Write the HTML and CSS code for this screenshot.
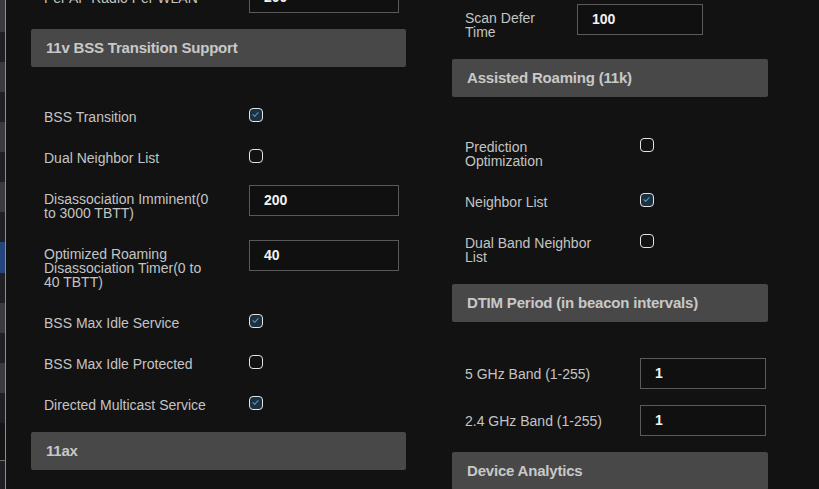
FILE: index.html
```html
<!DOCTYPE html>
<html lang="en">
<head>
<meta charset="utf-8">
<title>WLAN Advanced</title>
<link rel="stylesheet" href="styles.css">
</head>
<body>
<div class="page">
  <nav class="rail">
    <span class="rail-item gray first"></span>
    <span class="rail-item dark"></span>
    <span class="rail-item gray"></span>
    <span class="rail-item dark"></span>
    <span class="rail-item gray"></span>
    <span class="rail-item dark"></span>
    <span class="rail-item gray"></span>
    <span class="rail-item dark"></span>
    <span class="rail-item blue"></span>
    <span class="rail-item dark"></span>
    <span class="rail-item gray"></span>
    <span class="rail-item dark"></span>
    <span class="rail-item gray"></span>
    <span class="rail-item dark"></span>
    <span class="rail-item darkest"></span>
    <span class="rail-item dark"></span>
  </nav>
  <div class="rail-line"></div>

  <main class="content">
    <div class="col col-left">
      <div class="row row-center row-top">
        <span class="lbl lbl-left">Per AP Radio Per WLAN</span>
        <div class="field field-left">200</div>
      </div>

      <div class="section-head">11v BSS Transition Support</div>
      <div class="section-body body-left">
        <div class="row">
          <span class="lbl lbl-left lbl-check">BSS Transition</span>
          <span class="check checked"><svg viewBox="0 0 14 14"><path d="M3.8 7.2 L6 9.3 L10.3 4.6"/></svg></span>
        </div>
        <div class="row tight">
          <span class="lbl lbl-left lbl-check">Dual Neighbor List</span>
          <span class="check"></span>
        </div>
        <div class="row tight">
          <span class="lbl lbl-left lbl-input">Disassociation Imminent(0<br>to 3000 TBTT)</span>
          <div class="field field-left">200</div>
        </div>
        <div class="row">
          <span class="lbl lbl-left lbl-input">Optimized Roaming<br>Disassociation Timer(0 to<br>40 TBTT)</span>
          <div class="field field-left">40</div>
        </div>
        <div class="row">
          <span class="lbl lbl-left lbl-check">BSS Max Idle Service</span>
          <span class="check checked"><svg viewBox="0 0 14 14"><path d="M3.8 7.2 L6 9.3 L10.3 4.6"/></svg></span>
        </div>
        <div class="row">
          <span class="lbl lbl-left lbl-check">BSS Max Idle Protected</span>
          <span class="check"></span>
        </div>
        <div class="row">
          <span class="lbl lbl-left lbl-check">Directed Multicast Service</span>
          <span class="check checked"><svg viewBox="0 0 14 14"><path d="M3.8 7.2 L6 9.3 L10.3 4.6"/></svg></span>
        </div>
      </div>

      <div class="section-head">11ax</div>
    </div>

    <div class="col col-right">
      <div class="row row-scan">
        <span class="lbl lbl-scan lbl-input">Scan Defer<br>Time</span>
        <div class="field field-right">100</div>
      </div>

      <div class="section-head">Assisted Roaming (11k)</div>
      <div class="section-body body-right">
        <div class="row">
          <span class="lbl lbl-right lbl-check">Prediction<br>Optimization</span>
          <span class="check"></span>
        </div>
        <div class="row">
          <span class="lbl lbl-right lbl-check">Neighbor List</span>
          <span class="check checked"><svg viewBox="0 0 14 14"><path d="M3.8 7.2 L6 9.3 L10.3 4.6"/></svg></span>
        </div>
        <div class="row">
          <span class="lbl lbl-right lbl-check">Dual Band Neighbor<br>List</span>
          <span class="check"></span>
        </div>
      </div>

      <div class="section-head">DTIM Period (in beacon intervals)</div>
      <div class="section-body body-dtim">
        <div class="row row-center">
          <span class="lbl lbl-right">5 GHz Band (1-255)</span>
          <div class="field field-right">1</div>
        </div>
        <div class="row row-center">
          <span class="lbl lbl-right">2.4 GHz Band (1-255)</span>
          <div class="field field-right">1</div>
        </div>
      </div>

      <div class="section-head">Device Analytics</div>
    </div>
  </main>
</div>
</body>
</html>
```

FILE: styles.css
```css
* { box-sizing: border-box; }

html, body {
  margin: 0;
  padding: 0;
  background: #121212;
  height: 100%;
  overflow: hidden;
}

body {
  font-family: "Liberation Sans", Arial, sans-serif;
  font-size: 14px;
  color: #c4c4c4;
}

.page {
  display: flex;
  height: 489px;
}

/* left navigation rail */
.rail {
  width: 5px;
  display: flex;
  flex-direction: column;
  flex-shrink: 0;
}
.rail-item {
  display: block;
  height: 30px;
  flex-shrink: 0;
}
.rail-item.first { height: 32px; }
.rail-item.gray { background: #3a3b41; }
.rail-item.dark { background: #1f2024; }
.rail-item.blue { background: #24467e; height: 31px; }
.rail-item.darkest { background: #141416; height: 38px; border-bottom: 1px solid #6d6d72; }

.rail-line {
  width: 1px;
  background: #8d8d94;
  flex-shrink: 0;
}

/* content */
.content {
  display: flex;
  align-items: flex-start;
  padding-left: 25px;
  gap: 46px;
}

.col {
  display: flex;
  flex-direction: column;
}
.col-left {
  width: 375px;
  margin-top: -18px;
}
.col-right {
  width: 316px;
  margin-top: 4px;
}

.section-head {
  height: 38px;
  line-height: 38px;
  background: #484848;
  border-radius: 2px;
  padding-left: 15px;
  font-weight: bold;
  font-size: 15px;
  color: #c8c8c8;
  letter-spacing: -0.2px;
}

.section-body {
  padding-left: 13px;
  padding-bottom: 20px;
}
.body-left { padding-top: 41px; }
.body-right { padding-top: 41px; }
.body-dtim {
  padding-top: 36px;
  padding-bottom: 16px;
  display: flex;
  flex-direction: column;
  gap: 16px;
}

.row {
  display: flex;
  align-items: flex-start;
  margin-bottom: 25px;
}
.row.tight { margin-bottom: 20px; }
.section-body .row:last-child { margin-bottom: 0; }
.body-dtim .row { margin-bottom: 0; }
.row-center { align-items: center; }

.row-top {
  padding-left: 13px;
  margin-bottom: 16px;
}
.row-scan {
  padding-left: 13px;
  margin-bottom: 20px;
}

.lbl {
  line-height: 14px;
  flex-shrink: 0;
  white-space: nowrap;
}
.lbl-left { width: 205px; }
.lbl-right { width: 175px; }
.lbl-scan { width: 112px; }
.lbl-check { padding-top: 2px; }
.lbl-input { padding-top: 7px; }

.field {
  height: 31px;
  border: 1px solid #5a5a5a;
  background: #101010;
  color: #f2f2f2;
  font-weight: bold;
  font-size: 14px;
  line-height: 29px;
  padding-left: 14px;
}
.field-left { width: 150px; }
.field-right { width: 126px; }

.check {
  width: 14px;
  height: 14px;
  border: 1.5px solid #e4e4e4;
  border-radius: 4px;
  flex-shrink: 0;
  display: block;
}
.check.checked { background: #1b3140; }
.check svg {
  display: block;
  width: 11px;
  height: 11px;
}
.check svg path {
  fill: none;
  stroke: #5f93b6;
  stroke-width: 1.4;
  stroke-linecap: round;
  stroke-linejoin: round;
}
```
